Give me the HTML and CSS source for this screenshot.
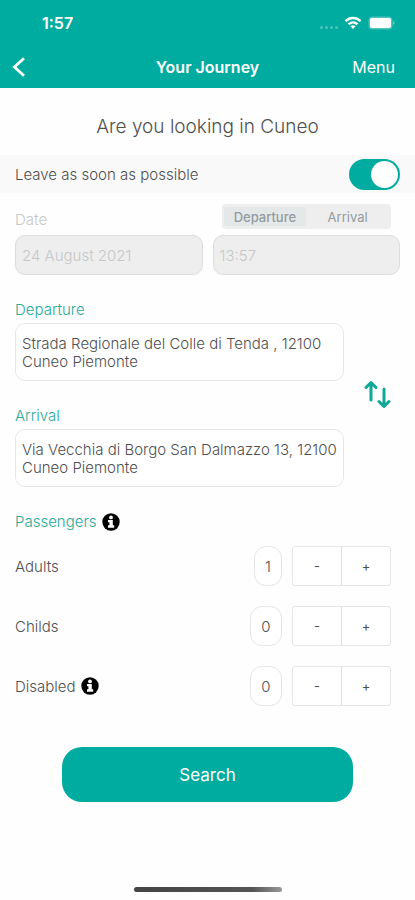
FILE: index.html
```html
<!DOCTYPE html>
<html lang="en">
<head>
    <meta charset="UTF-8">
    <meta name="viewport" content="width=device-width, initial-scale=1.0">
    <title>Your Journey</title>
    <link rel="stylesheet" href="styles.css">
</head>
<body>
    <header class="header">
        <div class="status-bar">
            <span class="clock">1:57</span>
            <div class="status-icons">
                <span class="signal"><i></i><i></i><i></i><i></i></span>
                <svg width="18" height="14" viewBox="0 0 18 14" fill="none" stroke="#fff" stroke-width="2.4">
                    <path d="M1.5 5.2C5.8 1 12.2 1 16.5 5.2"/>
                    <path d="M4.6 8.3C7.1 5.9 10.9 5.9 13.4 8.3"/>
                    <path d="M9 13L6.4 10.3C7.9 9 10.1 9 11.6 10.3Z" fill="#fff" stroke="none"/>
                </svg>
                <svg width="27" height="14" viewBox="0 0 27 14">
                    <rect x="0.5" y="0.5" width="24" height="13" rx="4" fill="#fff" fill-opacity="0.3"/>
                    <rect x="2" y="2" width="21" height="10" rx="2" fill="#fff"/>
                    <path d="M25.3 5C26.8 5.6 26.8 8.4 25.3 9Z" fill="#fff" fill-opacity="0.5"/>
                </svg>
            </div>
        </div>
        <nav class="nav-bar">
            <button type="button" class="back" aria-label="Back">
                <svg width="14" height="20" viewBox="0 0 14 20" fill="none" stroke="#fff" stroke-width="2.8">
                    <path d="M12 1.2L2.4 10L12 18.8"/>
                </svg>
            </button>
            <h1>Your Journey</h1>
            <a href="#menu" class="menu">Menu</a>
        </nav>
    </header>

    <main>
        <h2>Are you looking in Cuneo</h2>
        <form id="journey-form">
            <div class="asap">
                <label for="asap">Leave as soon as possible</label>
                <input type="checkbox" id="asap" class="switch" role="switch" checked>
            </div>

            <div class="when">
                <div class="field">
                    <label for="date">Date</label>
                    <input type="text" id="date" value="24 August 2021" disabled>
                </div>
                <div class="field">
                    <div class="segmented">
                        <button type="button" class="active" disabled>Departure</button>
                        <button type="button" disabled>Arrival</button>
                    </div>
                    <input type="text" id="time" value="13:57" aria-label="Time" disabled>
                </div>
            </div>

            <div class="route">
                <div class="places">
                    <div class="place">
                        <label for="departure">Departure</label>
                        <textarea id="departure" rows="2">Strada Regionale del Colle di Tenda , 12100 Cuneo Piemonte</textarea>
                    </div>
                    <div class="place">
                        <label for="arrival">Arrival</label>
                        <textarea id="arrival" rows="2">Via Vecchia di Borgo San Dalmazzo 13, 12100 Cuneo Piemonte</textarea>
                    </div>
                </div>
                <button type="button" class="swap" aria-label="Swap departure and arrival">
                    <svg width="28" height="28" viewBox="0 0 28 28" fill="none" stroke="#0fa797" stroke-width="3" stroke-linecap="round" stroke-linejoin="round">
                        <path d="M8 20V3M3 7.5L8 2.5L13 7.5"/>
                        <path d="M21 9V26M16 21.5L21 26.5L26 21.5"/>
                    </svg>
                </button>
            </div>

            <div class="passengers">
                <h3>Passengers
                    <svg class="info" width="18" height="18" viewBox="0 0 18 18">
                        <circle cx="9" cy="9" r="8.7"/>
                        <circle cx="9" cy="4.4" r="1.9" fill="#fff"/>
                        <path d="M6 7H10.8V12.3H12.2V14.7H6V12.3H7.4V9.3H6Z" fill="#fff"/>
                    </svg>
                </h3>
                <div class="row">
                    <label for="adults">Adults</label>
                    <input type="text" id="adults" class="count narrow" value="1" inputmode="numeric">
                    <div class="stepper">
                        <button type="button" data-step="-1">-</button>
                        <button type="button" data-step="1">+</button>
                    </div>
                </div>
                <div class="row">
                    <label for="childs">Childs</label>
                    <input type="text" id="childs" class="count" value="0" inputmode="numeric">
                    <div class="stepper">
                        <button type="button" data-step="-1">-</button>
                        <button type="button" data-step="1">+</button>
                    </div>
                </div>
                <div class="row">
                    <label for="disabled">Disabled
                        <svg class="info" width="18" height="18" viewBox="0 0 18 18">
                            <circle cx="9" cy="9" r="8.7"/>
                            <circle cx="9" cy="4.4" r="1.9" fill="#fff"/>
                            <path d="M6 7H10.8V12.3H12.2V14.7H6V12.3H7.4V9.3H6Z" fill="#fff"/>
                        </svg>
                    </label>
                    <input type="text" id="disabled" class="count" value="0" inputmode="numeric">
                    <div class="stepper">
                        <button type="button" data-step="-1">-</button>
                        <button type="button" data-step="1">+</button>
                    </div>
                </div>
            </div>

            <button type="button" class="search">Search</button>
        </form>
    </main>

    <div class="home-bar"></div>

    <script>
        document.querySelectorAll('.stepper button').forEach(function (button) {
            button.addEventListener('click', function () {
                const count = button.closest('.row').querySelector('.count');
                count.value = Math.max(0, Number(count.value) + Number(button.dataset.step));
            });
        });

        document.querySelector('.swap').addEventListener('click', function () {
            const departure = document.getElementById('departure');
            const arrival = document.getElementById('arrival');
            [departure.value, arrival.value] = [arrival.value, departure.value];
        });
    </script>
</body>
</html>
```
FILE: styles.css
```css
* {
    box-sizing: border-box;
}

body, h1, h2, h3, input, textarea, button {
    margin: 0;
    padding: 0;
    font-family: Inter, "Liberation Sans", sans-serif;
}

body {
    display: flex;
    flex-direction: column;
    min-height: 100vh;
    background: #fefefe;
    color: #505050;
    font-size: 15px;
    font-weight: 300;
}

button {
    border: none;
    background: none;
    cursor: pointer;
}

svg {
    display: block;
}

/* Header */
.header {
    background: #00ac9f;
    color: #fff;
}

.status-bar {
    display: flex;
    justify-content: space-between;
    align-items: center;
    height: 46px;
    padding: 0 20px 0 42px;
}

.clock {
    font-size: 16px;
    font-weight: 600;
}

.status-icons {
    display: flex;
    align-items: center;
    gap: 6px;
}

.signal {
    display: flex;
    gap: 2px;
    padding-top: 8px;
}

.signal i {
    width: 3px;
    height: 3px;
    border-radius: 50%;
    background: rgba(255, 255, 255, 0.3);
}

.nav-bar {
    display: grid;
    grid-template-columns: 1fr auto 1fr;
    align-items: center;
    height: 42px;
    padding: 0 12px;
}

.back {
    justify-self: start;
}

h1 {
    font-size: 16px;
    font-weight: 600;
}

.menu {
    justify-self: end;
    padding-right: 8px;
    color: #fff;
    font-size: 16px;
    font-weight: 400;
    text-decoration: none;
}

/* Date and time */
h2 {
    padding: 27px 15px 16px;
    font-size: 19px;
    font-weight: 300;
    line-height: 24px;
    text-align: center;
}

.asap {
    display: flex;
    justify-content: space-between;
    align-items: center;
    height: 38px;
    padding: 0 15px;
    background: #f9f9f9;
}

.switch {
    appearance: none;
    display: flex;
    justify-content: flex-end;
    width: 51px;
    height: 31px;
    padding: 2px;
    border-radius: 16px;
    background: #00ac9f;
}

.switch::before {
    content: "";
    width: 27px;
    height: 27px;
    border-radius: 50%;
    background: #fff;
}

.switch:not(:checked) {
    justify-content: flex-start;
    background: #ddd;
}

.when {
    display: grid;
    grid-template-columns: 1fr 1fr;
    gap: 10px;
    padding: 11px 15px 0;
}

.field {
    display: flex;
    flex-direction: column;
    justify-content: flex-end;
    gap: 6px;
}

.field label {
    color: #c6c8c8;
    line-height: 18px;
}

.field input {
    width: 100%;
    height: 40px;
    padding: 0 6px;
    border: 1px solid #dcdcdc;
    border-radius: 10px;
    background: #eee;
    color: #c6c8c8;
    font-size: 15px;
    font-weight: 300;
}

.segmented {
    display: grid;
    grid-template-columns: 1fr 1fr;
    height: 25px;
    margin: 0 9px;
    padding: 3px 2px;
    border-radius: 4px;
    background: #eee;
}

.segmented button {
    border-radius: 2px;
    color: #929ba0;
    font-size: 13px;
}

.segmented .active {
    background: #e5e8e9;
    font-weight: 500;
}

/* Departure and arrival */
.route {
    display: flex;
    align-items: center;
    gap: 19px;
    padding: 26px 24px 0 15px;
}

.places {
    display: flex;
    flex: 1;
    flex-direction: column;
    gap: 26px;
}

.place {
    display: flex;
    flex-direction: column;
    gap: 4px;
}

.place label, h3 {
    color: #27aa97;
    font-size: 15px;
    font-weight: 300;
    line-height: 18px;
}

.place textarea {
    height: 58px;
    padding: 11px 6px;
    border: 1px solid #e6e6e6;
    border-radius: 10px;
    background: #fff;
    color: #505050;
    font-size: 15px;
    font-weight: 300;
    line-height: 18px;
    resize: none;
}

/* Passengers */
.passengers {
    padding: 26px 24px 0 15px;
}

h3, .row label {
    display: flex;
    align-items: center;
    gap: 5px;
}

.row {
    display: flex;
    align-items: center;
    height: 40px;
    margin-top: 20px;
}

h3 + .row {
    margin-top: 15px;
}

.row label {
    flex: 1;
}

.count {
    width: 32px;
    height: 40px;
    margin-right: 10px;
    border: 1px solid #e6e6e6;
    border-radius: 12px;
    background: #fff;
    color: #505050;
    font-size: 15px;
    font-weight: 300;
    text-align: center;
}

.narrow {
    width: 28px;
}

.stepper {
    display: flex;
    height: 40px;
    border: 1px solid #e6e6e6;
    border-radius: 3px;
    background: #fff;
}

.stepper button {
    width: 48px;
    color: #505050;
    font-size: 13px;
}

.stepper button + button {
    width: 49px;
    border-left: 1px solid #dedede;
}

.search {
    display: block;
    width: 70%;
    height: 55px;
    margin: 41px auto 0;
    border-radius: 20px;
    background: #00ac9f;
    color: #fff;
    font-size: 17px;
    font-weight: 400;
}

.home-bar {
    width: 148px;
    height: 5px;
    margin: auto auto 8px;
    border-radius: 3px;
    background: linear-gradient(to right, #444, #555 80%, #999);
}
```
